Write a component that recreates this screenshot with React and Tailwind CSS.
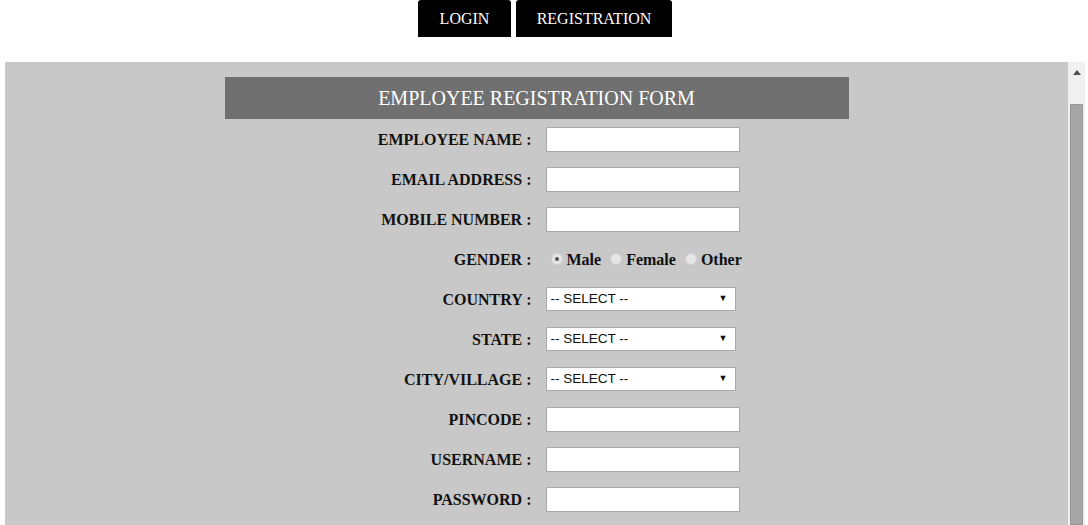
import React from 'react';

const textFields = ['EMPLOYEE NAME', 'EMAIL ADDRESS', 'MOBILE NUMBER'];
const selects = ['COUNTRY', 'STATE', 'CITY/VILLAGE'];
const lowerFields = ['PINCODE', 'USERNAME', 'PASSWORD'];

function Label({ text }) {
  return (
    <div className="text-right pr-[14px] pt-[2px] text-[16px] font-bold text-[#111]">{text} :</div>
  );
}

function TextInput() {
  return <div className="w-[194px] h-[25px] bg-white border border-[#a9a9a9]" />;
}

function SelectBox() {
  return (
    <div className="w-[190px] h-[24px] bg-white border border-[#a9a9a9] flex items-center justify-between pl-[4px] pr-[7px] font-['Liberation_Sans',sans-serif] text-[13.5px] text-[#111]">
      <span>-- SELECT --</span>
      <span className="text-[9px]">▼</span>
    </div>
  );
}

function Radio({ checked, label }) {
  return (
    <label className="flex items-center gap-[4px] mr-[9px]">
      <span className="w-[12px] h-[12px] rounded-full border border-[#d0d0d0] bg-[#e6e6e6] flex items-center justify-center">
        {checked && <span className="w-[4px] h-[4px] rounded-full bg-[#555]" />}
      </span>
      <span className="text-[16px] font-bold text-[#111] pt-[2px]">{label}</span>
    </label>
  );
}

function Row({ label, children }) {
  return (
    <div className="grid grid-cols-[321px_auto] items-center h-[40px]">
      <Label text={label} />
      <div>{children}</div>
    </div>
  );
}

function App() {
  return (
    <div className="w-[1088px] h-[525px] bg-white overflow-hidden font-['Liberation_Serif',serif]">
      <div className="flex justify-center gap-[5px] h-[62px] pl-[2px]">
        <button className="w-[93px] h-[37px] bg-black text-white text-[16px] rounded-t-[3px]">LOGIN</button>
        <button className="w-[156px] h-[37px] bg-black text-white text-[16px] rounded-t-[3px]">REGISTRATION</button>
      </div>
      <div className="flex ml-[5px] mr-[3px] h-[463px]">
        <div className="flex-1 bg-[#c8c8c8] pt-[15px]">
          <div className="w-[624px] mx-auto">
            <div className="h-[42px] bg-[#707070] flex items-center justify-center text-white text-[20px]">
              EMPLOYEE REGISTRATION FORM
            </div>
            {textFields.map((f) => (
              <Row key={f} label={f}><TextInput /></Row>
            ))}
            <Row label="GENDER">
              <div className="flex items-center pl-[5px]">
                <Radio checked label="Male" />
                <Radio label="Female" />
                <Radio label="Other" />
              </div>
            </Row>
            {selects.map((f) => (
              <Row key={f} label={f}><SelectBox /></Row>
            ))}
            {lowerFields.map((f) => (
              <Row key={f} label={f}><TextInput /></Row>
            ))}
          </div>
        </div>
        <div className="w-[17px] bg-[#f0f0f0] flex flex-col items-center">
          <div className="h-[20px] flex items-center justify-center">
            <svg width="8" height="5" viewBox="0 0 8 5"><path d="M4 0 L8 5 L0 5 Z" fill="#505050" /></svg>
          </div>
          <div className="mt-[22px] w-[13px] flex-1 bg-[#a6a6a6] border border-[#969696]" />
        </div>
      </div>
    </div>
  );
}

export default App;
